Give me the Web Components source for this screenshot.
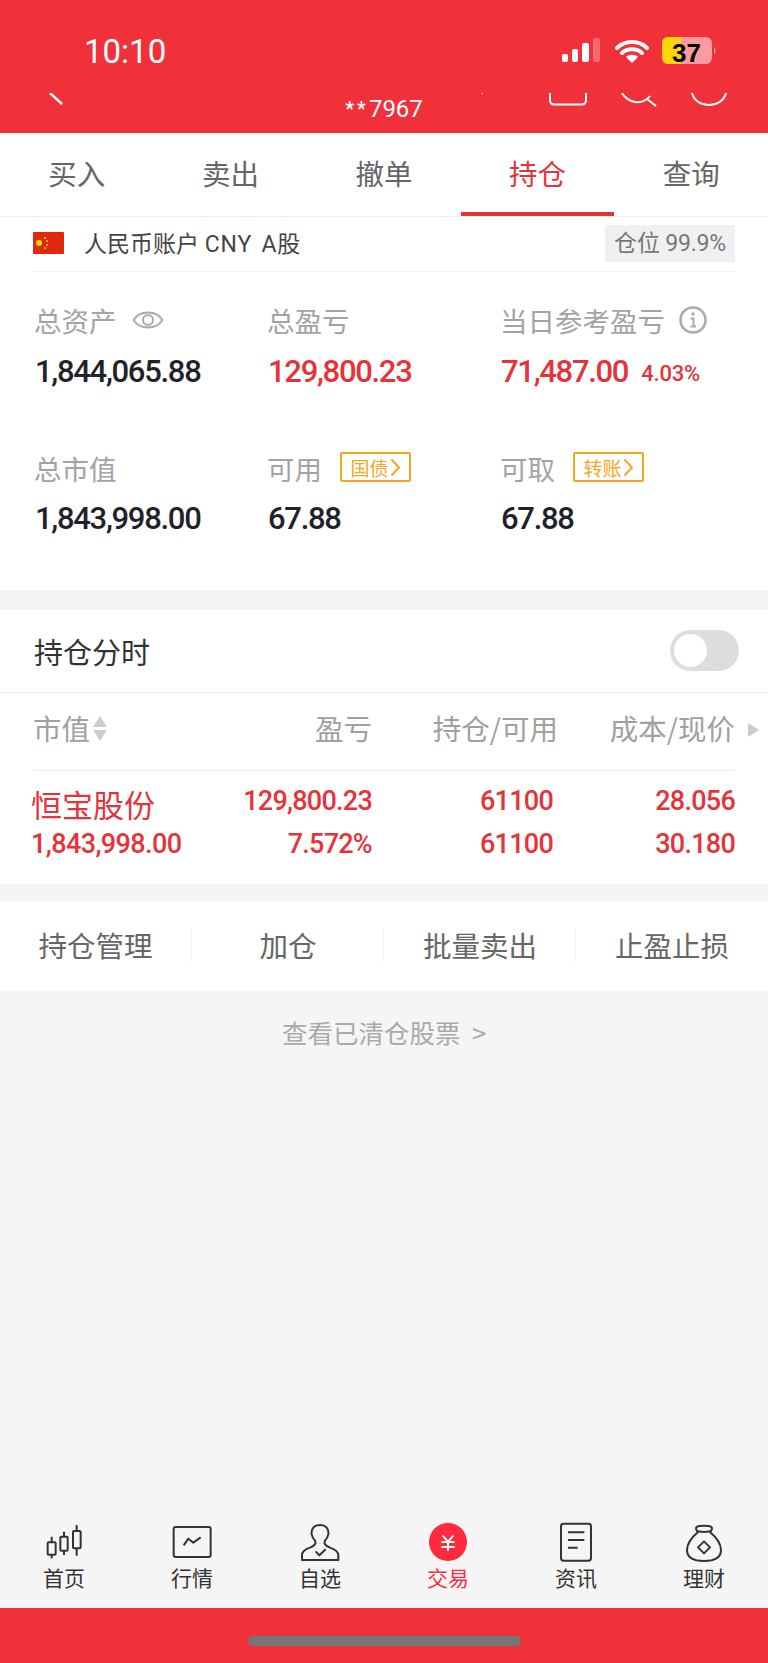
<!DOCTYPE html>
<html lang="zh-CN"><head><meta charset="utf-8"><title>持仓</title>
<style>
html,body{margin:0;padding:0;background:#f5f5f5}
body{font-family:Roboto,"Noto Sans CJK SC",sans-serif;width:768px;height:1663px;overflow:hidden}
trade-app{display:block}
</style></head><body>
<trade-app>
  <status-bar></status-bar>
  <nav-strip></nav-strip>
  <trade-tabs></trade-tabs>
  <account-row></account-row>
  <asset-panel>
    <stat-cell><span slot="label">总资产</span><icon-eye slot="extra"></icon-eye><span slot="value">1,844,065.88</span></stat-cell>
    <stat-cell tone="red"><span slot="label">总盈亏</span><span slot="value">129,800.23</span></stat-cell>
    <stat-cell tone="red"><span slot="label">当日参考盈亏</span><icon-info slot="extra"></icon-info><span slot="value">71,487.00</span><small-pct slot="value">4.03%</small-pct></stat-cell>
    <stat-cell><span slot="label">总市值</span><span slot="value">1,843,998.00</span></stat-cell>
    <stat-cell><span slot="label">可用</span><tag-link slot="extra">国债</tag-link><span slot="value">67.88</span></stat-cell>
    <stat-cell><span slot="label">可取</span><tag-link slot="extra">转账</tag-link><span slot="value">67.88</span></stat-cell>
  </asset-panel>
  <toggle-row></toggle-row>
  <position-table></position-table>
  <action-bar></action-bar>
  <closed-link></closed-link>
  <bottom-tabs></bottom-tabs>
  <home-bar></home-bar>
</trade-app>
<script>
const RED='#f1313a';
const def=(name,html)=>customElements.define(name,class extends HTMLElement{
  constructor(){super();this.attachShadow({mode:'open'}).innerHTML=html}
});
def('status-bar',`<style>
:host{display:flex;align-items:center;height:93px;background:${RED};box-sizing:border-box;padding:10px 0 0 84px;color:#fff;overflow:hidden;position:relative}
.t{font:400 33px/1 Roboto,sans-serif;width:478px;margin-top:-1px}
svg{display:block;margin-top:11px}
.p{position:absolute;left:672px;top:41px;font:700 26px/24px 'Liberation Sans',sans-serif;color:#000}
</style><div class="t">10:10</div>
<svg width="156" height="40" viewBox="0 0 156 40">
<g fill="#fff"><rect x="0" y="17" width="6" height="8" rx="2"/><rect x="10" y="12" width="6" height="13" rx="2"/><rect x="20" y="6" width="7" height="19" rx="2"/></g>
<rect x="31" y="1" width="7" height="24" rx="2" fill="#fff" opacity=".28"/>
<path d="M55 11C63 3 77 3 85 11M60 16C65 11 75 11 80 16" fill="none" stroke="#fff" stroke-width="4" stroke-linecap="round"/>
<path d="M64 20C67 17 73 17 76 20L70 26Z" fill="#fff"/>
<rect x="100" y="0" width="50" height="27" rx="6" fill="#fb9aa0"/>
<path d="M106 0H119V27H106A6 6 0 0 1 100 21V6A6 6 0 0 1 106 0Z" fill="#ffd60a"/>
<path d="M152 10C154 11 154 16 152 17Z" fill="#fb9aa0"/>
</svg><span class="p">37</span>`);
def('nav-strip',`<style>
:host{display:grid;grid-template-columns:1fr auto 1fr;height:40px;background:${RED};color:#fff;overflow:hidden}
.n{font:400 24px/24px Roboto,sans-serif;padding-top:4px;letter-spacing:0}
.n b{font-weight:500;font-size:20px;letter-spacing:3px;position:relative;top:-1px}
.l{padding-left:49px}.r{display:flex;justify-content:flex-end;gap:33px;padding-right:41px}
svg{display:block}
.dot{position:absolute;left:481px;top:93px;width:2px;height:1px;background:#f9b4b8}
</style>
<div class="l"><svg width="16" height="13" viewBox="0 0 16 13"><path d="M1 0L13 11" stroke="#fff" stroke-width="2.500" fill="none"/></svg></div>
<div class="n"><b>**</b>7967</div>
<div class="r">
<svg width="38" height="13" viewBox="0 0 38 13"><path d="M1 0V7Q1 11.500 6 11.500H32Q37 11.500 37 7V0" fill="none" stroke="#fff" stroke-width="2"/></svg>
<svg width="38" height="14" viewBox="0 0 38 14"><path d="M2 0C8 10 22 13 30 3M27 6L36 13" fill="none" stroke="#fff" stroke-width="2"/></svg>
<svg width="36" height="14" viewBox="0 0 36 14"><path d="M1 0C5 16 31 16 35 0" fill="none" stroke="#fff" stroke-width="2"/></svg>
</div><div class="dot"></div>`);
def('trade-tabs',`<style>
:host{display:grid;grid-template-columns:repeat(5,1fr);height:83px;background:#fff;border-bottom:1px solid #eee;font:400 28.500px/1 "Noto Sans CJK SC",sans-serif;color:#666}
div{display:flex;align-items:center;justify-content:center;box-sizing:border-box;padding-bottom:2px}
.on{color:#e5333a;border-bottom:4px solid #e5333a;padding-bottom:0;padding-top:2px}
</style><div>买入</div><div>卖出</div><div>撤单</div><div class="on">持仓</div><div>查询</div>`);
def('account-row',`<style>
:host{display:block;background:#fff;padding:0 33px;height:55px}
.r{display:flex;align-items:center;height:54px;border-bottom:1px solid #f0f0f0}
.x{margin-left:20px;font:400 23px/1 Roboto,"Noto Sans CJK SC",sans-serif;color:#444;flex:1;white-space:pre}
.x i{font-style:normal;letter-spacing:.8px;word-spacing:3px}
.b{width:130px;height:37px;margin-top:-1px;background:#f0f0f2;color:#777;font:400 23px/37px Roboto,"Noto Sans CJK SC",sans-serif;text-align:center;letter-spacing:-.2px}
svg{display:block;margin-top:-2px}
</style><div class="r">
<svg width="31" height="22" viewBox="0 0 31 22"><rect width="31" height="22" rx="1" fill="#de2910"/><g fill="#ffde00"><circle cx="6" cy="11" r="3"/><circle cx="12" cy="6" r="1"/><circle cx="14" cy="9" r="1"/><circle cx="14" cy="13" r="1"/><circle cx="12" cy="16" r="1"/></g></svg>
<div class="x">人民币账户 <i>CNY A</i>股</div><div class="b">仓位 99.9%</div></div>`);
def('asset-panel',`<style>
:host{display:grid;grid-template-columns:233px 233px 1fr;row-gap:56px;align-content:start;height:318px;box-sizing:border-box;padding:28px 0 0 34px;background:#fff}
</style><slot></slot>`);
def('stat-cell',`<style>
:host{display:flex;flex-direction:column;gap:11.500px}
.l{display:flex;align-items:center;height:40px;font:400 27.500px/40px "Noto Sans CJK SC",sans-serif;color:#a3a3a3}
.v{display:flex;align-items:center;height:40px;font:500 31px/40px Roboto,sans-serif;letter-spacing:-1.300px;color:#1f2329;margin-left:1px}
:host([tone=red]) .v{color:#e5333a}
</style><div class="l"><slot name="label"></slot><slot name="extra"></slot></div><div class="v"><slot name="value"></slot></div>`);
def('small-pct',`<style>:host{display:inline-block;margin-left:13px;font:500 22px/1 Roboto,sans-serif;letter-spacing:-.2px;padding-top:5px}</style><slot></slot>`);
def('icon-eye',`<style>:host{display:block;margin-left:15px}svg{display:block}</style><svg width="32" height="24" viewBox="0 0 32 24"><path d="M1.500 12C8 2 24 2 30.500 12C24 22 8 22 1.500 12Z" fill="none" stroke="#aaa" stroke-width="2"/><circle cx="16" cy="12" r="5" fill="none" stroke="#aaa" stroke-width="2"/></svg>`);
def('icon-info',`<style>:host{display:block;margin-left:13px}svg{display:block}</style><svg width="30" height="28" viewBox="0 0 30 28"><circle cx="15" cy="14" r="12.500" fill="none" stroke="#aaa" stroke-width="2.500"/><path d="M12.500 12.500H15.500V20M12.500 20.500H18" fill="none" stroke="#aaa" stroke-width="2"/><circle cx="15" cy="8" r="1.700" fill="#aaa"/></svg>`);
def('tag-link',`<style>:host{display:flex;align-items:center;justify-content:center;margin-left:18px;width:71px;height:30px;box-sizing:border-box;border:2px solid #f5a623;border-radius:2px;color:#f5a623;font:400 19px/1 "Noto Sans CJK SC",sans-serif;margin-top:-1px}svg{display:block;margin-left:1px}</style><slot></slot><svg width="11" height="19" viewBox="0 0 11 19"><path d="M1.500 1.500L9 9.500L1.500 17.500" fill="none" stroke="#f5a623" stroke-width="2"/></svg>`);
def('toggle-row',`<style>
:host{display:flex;align-items:center;justify-content:space-between;height:83px;margin-top:20px;padding:0 29px 0 34px;box-sizing:border-box;background:#fff;border-bottom:1px solid #f0f0f0;font:400 29px/1 "Noto Sans CJK SC",sans-serif;color:#333}
.s{width:69px;height:41px;border-radius:21px;background:#ddd;box-sizing:border-box;padding:4px 0 0 4px;margin-top:-2px}
.k{width:33px;height:33px;border-radius:50%;background:#fff}
</style><span>持仓分时</span><div class="s"><div class="k"></div></div>`);
def('position-table',`<style>
:host{display:block;background:#fff;height:191px;position:relative}
.g{display:grid;grid-template-columns:150px 189px 181px 182px;margin:0 33px}
.h{height:78px;box-sizing:border-box;padding-bottom:6px;align-items:center;color:#a0a0a0;font:400 28.500px/1 "Noto Sans CJK SC",Roboto,sans-serif;border-bottom:1px solid #f0f0f0}
.h>*,.c{text-align:right}
.h .f{text-align:left;display:flex;align-items:center;gap:3px}
.h span.w{white-space:nowrap;margin-left:-60px}
.h .m{margin-right:-5px}
svg{display:block}
.tri{position:absolute;left:748px;top:30px}
.b{padding-top:9px;color:#e5333a;grid-auto-rows:43px}
.c{font:500 27px/43px Roboto,sans-serif;letter-spacing:-.75px;white-space:nowrap}
.n{font:400 31px/33px "Noto Sans CJK SC",sans-serif;padding-top:7px;text-align:left;height:33px;margin-left:-2px;white-space:nowrap}
.l{text-align:left;margin-left:-2px;letter-spacing:-.6px}
</style>
<div class="g h"><div class="f">市值<svg width="14" height="25" viewBox="0 0 14 25"><path d="M7 0L14 11H0ZM7 25L0 14H14Z" fill="#ccc"/></svg></div><div>盈亏</div><div class="m"><span class="w">持仓/可用</span></div><div><span class="w">成本/现价</span></div></div>
<svg class="tri" width="11" height="14" viewBox="0 0 11 14"><path d="M0 0L11 7L0 14Z" fill="#ccc"/></svg>
<div class="g b"><div class="n">恒宝股份</div><div class="c">129,800.23</div><div class="c">61100</div><div class="c">28.056</div>
<div class="c l">1,843,998.00</div><div class="c">7.572%</div><div class="c">61100</div><div class="c">30.180</div></div>`);
def('action-bar',`<style>
:host{display:grid;grid-template-columns:repeat(4,192px);align-items:center;height:90px;margin-top:17px;background:#fff;font:400 28.500px/1 "Noto Sans CJK SC",sans-serif;color:#666;text-align:center}
div{height:34px;line-height:34px;border-left:1px solid #f0f0f0;margin-top:-2px;margin-left:-1px}
div:first-of-type{border-left:0}
</style><div>持仓管理</div><div>加仓</div><div>批量卖出</div><div>止盈止损</div>`);
def('closed-link',`<style>
:host{display:flex;flex-direction:column;height:517px;box-sizing:border-box;padding-top:24px;align-items:center;font:400 25.500px/34px "Noto Sans CJK SC",sans-serif;color:#aaa;background:#f5f5f5}
</style><div>查看已清仓股票&nbsp; &gt;</div>`);
const tab=(label,vb,body,on)=>`<div class="${on?'on':''}"><svg width="48" height="40" viewBox="${vb} 66 144 120" fill="none" stroke="#333" stroke-width="6" stroke-linejoin="round">${body}</svg><span>${label}</span></div>`;
def('bottom-tabs',`<style>
:host{display:grid;grid-template-columns:repeat(6,128px);height:100px;box-sizing:border-box;border-top:1px solid #f3f3f3;background:#f5f5f5;font:400 21px/26px "Noto Sans CJK SC",sans-serif;color:#333}
div{display:flex;flex-direction:column;align-items:center;padding-top:13px}
svg{display:block;margin-bottom:2px}
.on{color:#ff2a3c}
</style>`+
tab('首页','120',`<path d="M155 110V175M192 95V165M230 75V167" /><rect x="143" y="127" width="24" height="37" rx="3" fill="#f5f5f5"/><rect x="181" y="110" width="22" height="42" rx="3" fill="#f5f5f5"/><rect x="219" y="93" width="23" height="52" rx="3" fill="#f5f5f5"/>`)+
tab('行情','504',`<rect x="521" y="81" width="111" height="90" rx="6"/><path d="M551 136L565 116L580 128L602 112"/>`)+
tab('自选','888',`<path d="M945 122C926 100 935 75 960 75C985 75 994 100 975 122C971 130 975 137 990 143C1008 149 1015 155 1015 166V180H906V166C906 155 912 149 930 143C945 137 949 130 945 122Z"/><path d="M947 154L958 166L977 148"/>`)+
tab('交易','120',`<circle cx="192" cy="126" r="57" fill="#ff2a3c" stroke="none"/><path d="M176 107L192 125L208 107M172 126H212M172 141H212M192 125V152" stroke="#fff" stroke-linejoin="miter"/>`,true)+
tab('资讯','504',`<rect x="531" y="71" width="90" height="111" rx="8"/><path d="M552 97H601M552 120H601M552 143H581"/>`)+
tab('理财','888',`<path d="M943 95C925 110 909 130 909 150C909 175 930 183 960 183C990 183 1011 175 1011 150C1011 130 995 110 977 95"/><path d="M938 92C932 80 940 77 960 77C980 77 988 80 982 92C975 97 945 97 938 92Z"/><path d="M960 124L978 142L960 160L942 142Z"/>`));
def('home-bar',`<style>
:host{display:flex;justify-content:center;height:55px;box-sizing:border-box;padding-top:28px;background:${RED}}
div{width:273px;height:10px;border-radius:5px;background:#757575}
</style><div></div>`);
</script>
</body></html>
